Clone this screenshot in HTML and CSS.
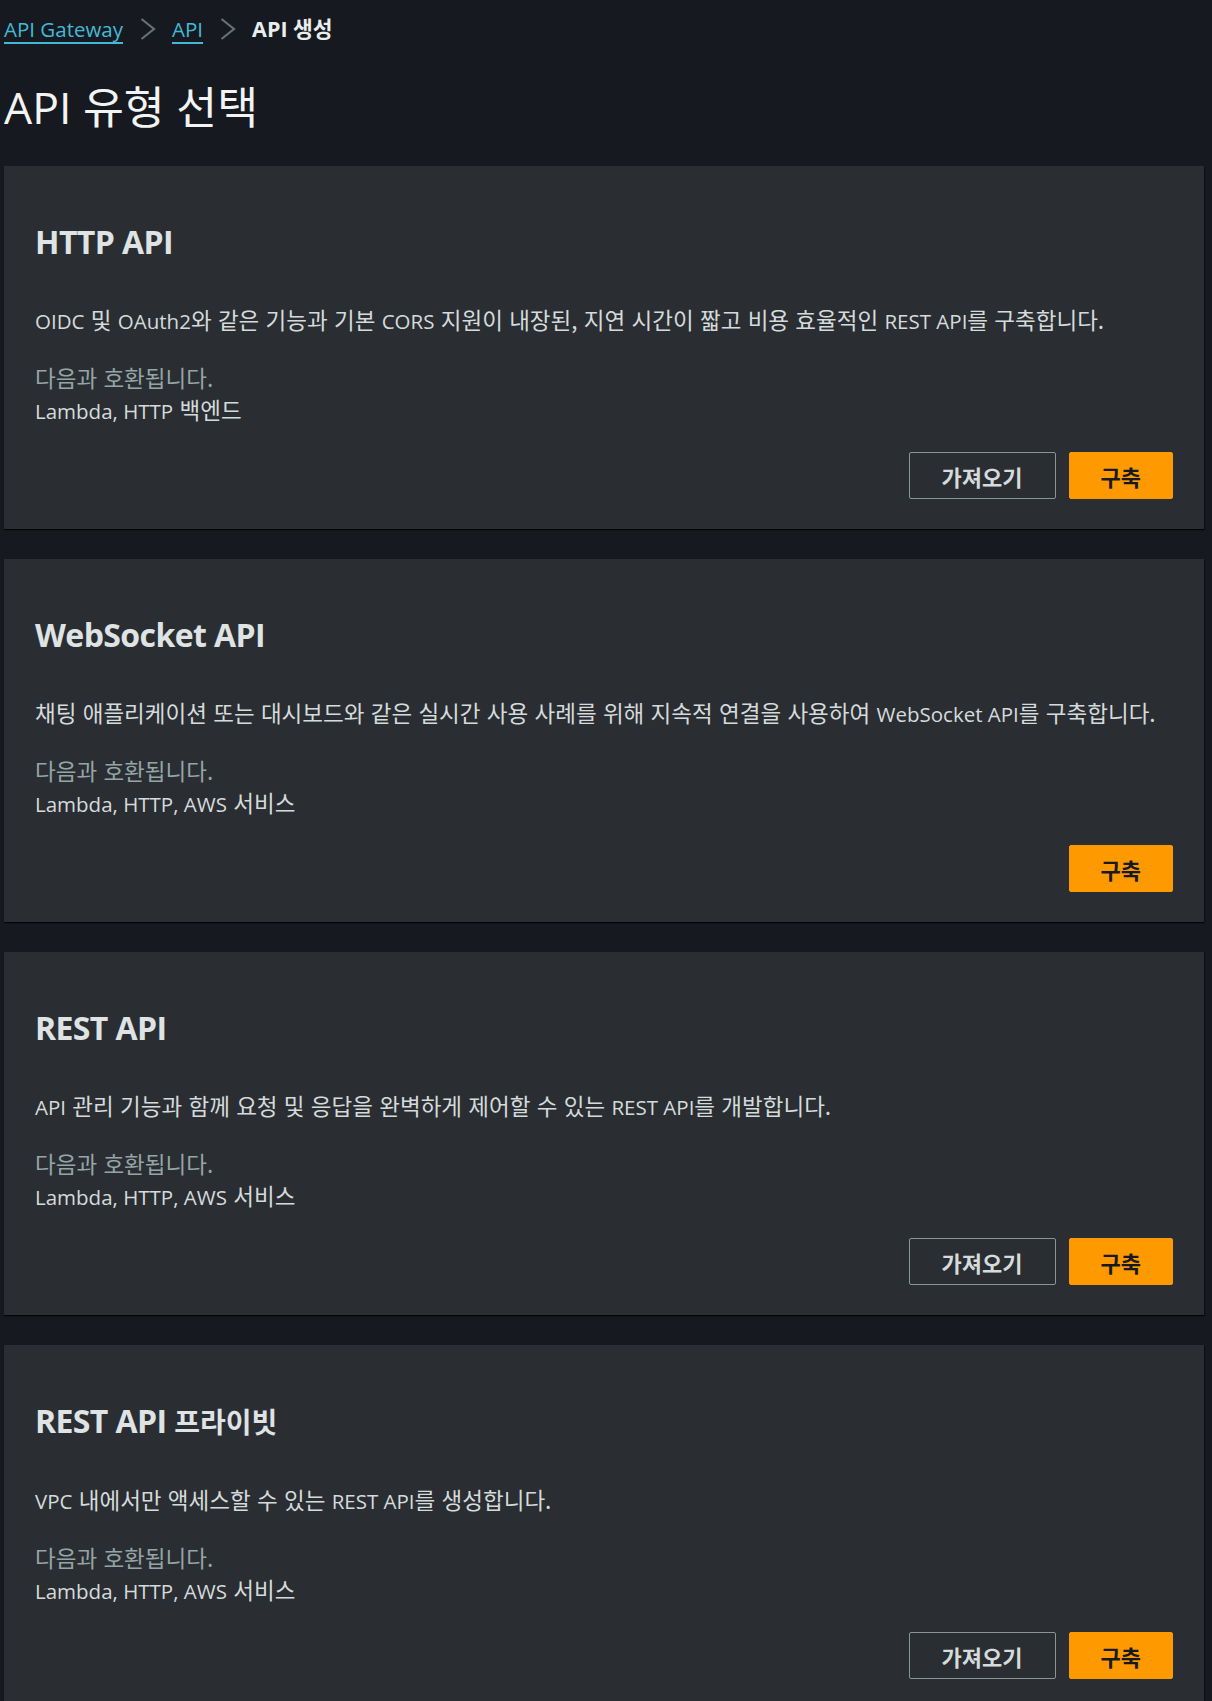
FILE: index.html
```html
<!DOCTYPE html>
<html lang="ko">
<head>
<meta charset="utf-8">
<title>API 생성</title>
<link rel="stylesheet" href="styles.css">
</head>
<body>
<div class="page">
  <nav class="breadcrumbs">
    <a class="crumb-link" href="#">API Gateway</a>
    <svg class="chevron" width="16" height="22" viewBox="0 0 16 22"><path d="M1.5 1 L14 11 L1.5 21" fill="none" stroke="#687078" stroke-width="2.2"/></svg>
    <a class="crumb-link" href="#">API</a>
    <svg class="chevron" width="16" height="22" viewBox="0 0 16 22"><path d="M1.5 1 L14 11 L1.5 21" fill="none" stroke="#687078" stroke-width="2.2"/></svg>
    <span class="crumb-current">API 생성</span>
  </nav>

  <h1 class="title">API 유형 선택</h1>

  <section class="card">
    <h2 class="card-title">HTTP API</h2>
    <p class="card-desc"><span class="latin">OIDC</span> 및 <span class="latin">OAuth2</span>와 같은 기능과 기본 <span class="latin">CORS</span> 지원이 내장된, 지연 시간이 짧고 비용 효율적인 <span class="latin">REST API</span>를 구축합니다.</p>
    <div class="compat">
      <div class="compat-label">다음과 호환됩니다.</div>
      <div class="compat-value"><span class="latin">Lambda, HTTP</span> 백엔드</div>
    </div>
    <div class="actions">
      <button class="btn btn-normal">가져오기</button>
      <button class="btn btn-primary">구축</button>
    </div>
  </section>

  <section class="card">
    <h2 class="card-title">WebSocket API</h2>
    <p class="card-desc">채팅 애플리케이션 또는 대시보드와 같은 실시간 사용 사례를 위해 지속적 연결을 사용하여 <span class="latin">WebSocket API</span>를 구축합니다.</p>
    <div class="compat">
      <div class="compat-label">다음과 호환됩니다.</div>
      <div class="compat-value"><span class="latin">Lambda, HTTP, AWS</span> 서비스</div>
    </div>
    <div class="actions">
      <button class="btn btn-primary">구축</button>
    </div>
  </section>

  <section class="card">
    <h2 class="card-title">REST API</h2>
    <p class="card-desc"><span class="latin">API</span> 관리 기능과 함께 요청 및 응답을 완벽하게 제어할 수 있는 <span class="latin">REST API</span>를 개발합니다.</p>
    <div class="compat">
      <div class="compat-label">다음과 호환됩니다.</div>
      <div class="compat-value"><span class="latin">Lambda, HTTP, AWS</span> 서비스</div>
    </div>
    <div class="actions">
      <button class="btn btn-normal">가져오기</button>
      <button class="btn btn-primary">구축</button>
    </div>
  </section>

  <section class="card">
    <h2 class="card-title">REST API <span class="title-ko">프라이빗</span></h2>
    <p class="card-desc"><span class="latin">VPC</span> 내에서만 액세스할 수 있는 <span class="latin">REST API</span>를 생성합니다.</p>
    <div class="compat">
      <div class="compat-label">다음과 호환됩니다.</div>
      <div class="compat-value"><span class="latin">Lambda, HTTP, AWS</span> 서비스</div>
    </div>
    <div class="actions">
      <button class="btn btn-normal">가져오기</button>
      <button class="btn btn-primary">구축</button>
    </div>
  </section>
</div>
</body>
</html>
```

FILE: styles.css
```css
html, body {
  margin: 0;
  padding: 0;
  background: #16191f;
}

body {
  font-family: "Open Sans", "Noto Sans CJK KR", sans-serif;
  color: #d5dbdb;
}

.page {
  padding: 15px 8px 40px 4px;
}

.breadcrumbs {
  display: flex;
  align-items: center;
  font-size: 20.5px;
  line-height: 28px;
  height: 28px;
}

.crumb-link {
  color: #44b9d6;
  text-decoration: underline;
  text-decoration-thickness: 2px;
  text-underline-offset: 5px;
}

.chevron {
  margin: 0 16.5px 0 16.5px;
  flex: none;
}

.crumb-current {
  font-size: 21.5px;
  font-weight: 700;
  color: #eaeded;
}

.title {
  margin: 38px 0 33px 0;
  font-size: 44.5px;
  line-height: 52px;
  font-weight: 400;
  color: #f2f3f3;
}

.card {
  background: #2a2e33;
  padding: 56px 31px 30px 31px;
  margin-bottom: 30px;
  box-shadow: 0 1px 1px 0 rgba(0, 0, 0, 0.7), 1px 1px 1px 0 rgba(0, 0, 0, 0.35);
}

.card-title {
  margin: 0;
  font-size: 32px;
  line-height: 40px;
  font-weight: 700;
  letter-spacing: -0.6px;
  color: #dfe3e4;
}

.title-ko {
  font-size: 28px;
  letter-spacing: 0;
}

.card-desc {
  margin: 43px 0 0 0;
  font-family: "Noto Sans CJK KR", "Open Sans", sans-serif;
  font-size: 22.5px;
  line-height: 28px;
  white-space: nowrap;
}

.latin {
  font-family: "Open Sans", "Noto Sans CJK KR", sans-serif;
  font-size: 20.5px;
  font-weight: 500;
  line-height: 1;
}

.compat {
  margin-top: 28px;
  font-family: "Noto Sans CJK KR", "Open Sans", sans-serif;
  font-size: 22.5px;
  line-height: 32px;
}

.compat-label {
  color: #95a5a6;
}

.compat-value {
  color: #d5dbdb;
}

.actions {
  display: flex;
  justify-content: flex-end;
  gap: 13px;
  margin-top: 27px;
}

.btn {
  font-family: "Noto Sans CJK KR", "Open Sans", sans-serif;
  font-size: 22px;
  font-weight: 700;
  height: 47px;
  padding: 0 31px;
  border-radius: 2px;
  cursor: pointer;
}

.btn-normal {
  background: transparent;
  border: 1px solid #879596;
  color: #d5dbdb;
  padding: 0 32px;
}

.btn-primary {
  background: #ff9900;
  border: 1px solid #ff9900;
  color: #16191f;
}
```
